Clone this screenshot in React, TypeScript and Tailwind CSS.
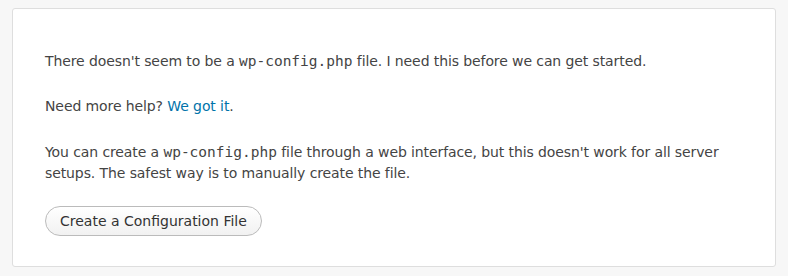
export default function App() {
  return (
    <div className="min-h-[276px] bg-[#f7f7f7] px-[12px] pt-[8px] pb-[9px] font-['DejaVu_Sans',sans-serif] text-[14px] leading-[21px] text-[#444]">
      <div className="rounded-[3px] border border-[#dedede] bg-white px-[32px] pt-[42px] pb-[30px]">
        <p className="tracking-[-0.1px]">
          There doesn't seem to be a{" "}
          <code className="font-['DejaVu_Sans_Mono',monospace] text-[14.5px] tracking-normal">wp-config.php</code> file. I
          need this before we can get started.
        </p>
        <p className="mt-[24px] tracking-[-0.1px]">
          Need more help?{" "}
          <a href="#" className="text-[#0073aa]">
            We got it
          </a>
          .
        </p>
        <p className="mt-[25px] tracking-[-0.1px]">
          You can create a{" "}
          <code className="font-['DejaVu_Sans_Mono',monospace] text-[14.5px] tracking-normal">wp-config.php</code> file
          through a web interface, but this doesn't work for all server setups. The safest way is to manually create the
          file.
        </p>
        <div className="mt-[22px]">
          <button className="h-[30px] rounded-full border border-[#bbb] bg-gradient-to-b from-white to-[#f1f1f1] px-[14px] text-[14px] text-[#333]">
            Create a Configuration File
          </button>
        </div>
      </div>
    </div>
  );
}
